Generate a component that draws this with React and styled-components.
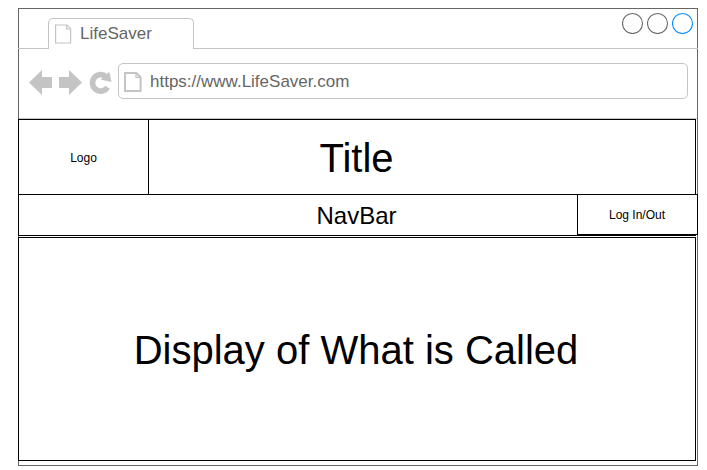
import React from "react";
import styled, { createGlobalStyle } from "styled-components";

const GlobalStyle = createGlobalStyle`
  *, *::before, *::after { box-sizing: border-box; }
  body { margin: 0; background: #fff; font-family: "Liberation Sans", Arial, sans-serif; }
`;

const Window = styled.main`
  width: 680px;
  height: 458px;
  margin: 8px 0 0 18px;
  border: 1px solid #666;
  display: flex;
  flex-direction: column;
`;

const TabStrip = styled.header`
  height: 40px;
  display: flex;
  align-items: flex-end;
  flex: none;
  margin: 0 -1px 0 -1px;
`;

const StripLine = styled.div`
  align-self: stretch;
  border-bottom: 1px solid #c4c4c4;
  width: ${(p) => p.$width || "auto"};
  flex: ${(p) => (p.$width ? "none" : "1")};
  display: flex;
  justify-content: flex-end;
  gap: 3px;
  padding: 3px 4px 0 0;
`;

const Tab = styled.div`
  width: 146px;
  height: 31px;
  border: 1px solid #c4c4c4;
  border-bottom: 0;
  border-radius: 5px 5px 0 0;
  display: flex;
  align-items: center;
  padding-left: 6px;
`;

const Label = styled.span`
  font-size: 17px;
  line-height: 20px;
  color: #666;
  white-space: nowrap;
  margin-left: ${(p) => p.$gap}px;
`;

const Icon = styled.svg`
  display: block;
  flex: none;
`;

const Toolbar = styled.div`
  height: 70px;
  flex: none;
  display: flex;
  align-items: flex-start;
  padding: 14px 9px 0 10px;
  border-bottom: 1px solid #c4c4c4;
`;

const NavIcons = styled.div`
  width: 89px;
  flex: none;
`;

const AddressBar = styled.div`
  flex: 1;
  height: 36px;
  border: 1px solid #c4c4c4;
  border-radius: 5px;
  display: flex;
  align-items: center;
  padding: 2px 0 0 5px;
`;

const Page = styled.div`
  margin-left: -1px;
  width: 678px;
  display: flex;
  flex-direction: column;
  color: #000;
`;

const Banner = styled.div`
  height: 75px;
  border: 1px solid #000;
  border-bottom: 0;
  display: grid;
`;

const Cell = styled.div`
  grid-area: 1 / 1;
  display: flex;
  align-items: center;
  justify-content: center;
  font-size: ${(p) => p.$size}px;
  white-space: nowrap;
`;

const TitleCell = styled(Cell)`
  padding: 3px 1px 0 0;
`;

const LogoCell = styled(Cell)`
  width: 130px;
  padding-top: 2px;
  border-right: 1px solid #000;
`;

const NavRow = styled.nav`
  height: 42px;
  display: grid;
`;

const NavCell = styled(Cell)`
  border: 1px solid #000;
  padding: 1px 1px 0 0;
`;

const LoginCell = styled(Cell)`
  justify-self: end;
  width: 121px;
  height: 41px;
  margin-right: -2px;
  padding-right: 1px;
  border: 1px solid #000;
  background: #fff;
`;

const Display = styled.section`
  height: 224px;
  margin-top: 1px;
  border: 1px solid #000;
  padding: 2px 2px 0 0;
  display: flex;
  align-items: center;
  justify-content: center;
  font-size: 40px;
  white-space: nowrap;
`;

const DocIcon = ({ heavy }) => (
  <Icon width="18" height="20" viewBox="0 0 18 20" fill="none" stroke="#c4c4c4" strokeWidth={heavy ? 2 : 1.2}>
    <path d={heavy ? "M1 1H12.3L16.6 5.2V19H1Z" : "M.6 1H12L15.6 4.7V19H.6Z"} />
    <path d={heavy ? "M12 1V5.3H16.6" : "M11.6 1V5H15.6"} strokeWidth="1.2" />
  </Icon>
);

const WindowDot = ({ color }) => (
  <Icon width="22" height="22" viewBox="0 0 22 22">
    <circle cx="10.5" cy="11.5" r="10" fill="none" stroke={color} strokeWidth="1.1" />
  </Icon>
);

export default function App() {
  return (
    <>
      <GlobalStyle />
      <Window>
        <TabStrip>
          <StripLine $width="30px" />
          <Tab>
            <DocIcon />
            <Label $gap={7}>LifeSaver</Label>
          </Tab>
          <StripLine>
            <WindowDot color="#666" />
            <WindowDot color="#666" />
            <WindowDot color="#008cff" />
          </StripLine>
        </TabStrip>
        <Toolbar>
          <NavIcons>
            <Icon width="89" height="36" viewBox="29 63 89 36" fill="#c4c4c4">
              <path d="M29 82.5L42 70V77H52V88H42V95Z" />
              <path d="M82 82.5L69 70V77H59V88H69V95Z" />
              <path d="M105.5 76.2A8.2 8.2 0 1 0 107.6 87.3" fill="none" stroke="#c4c4c4" strokeWidth="5.6" />
              <path d="M109.3 71.8L111.5 82L100.6 79.5Z" />
            </Icon>
          </NavIcons>
          <AddressBar>
            <DocIcon heavy />
            <Label $gap={8}>https://www.LifeSaver.com</Label>
          </AddressBar>
        </Toolbar>
        <Page>
          <Banner>
            <TitleCell $size={40}>Title</TitleCell>
            <LogoCell $size={12}>Logo</LogoCell>
          </Banner>
          <NavRow>
            <NavCell $size={24}>NavBar</NavCell>
            <LoginCell $size={12}>Log In/Out</LoginCell>
          </NavRow>
          <Display>Display of What is Called</Display>
        </Page>
      </Window>
    </>
  );
}
